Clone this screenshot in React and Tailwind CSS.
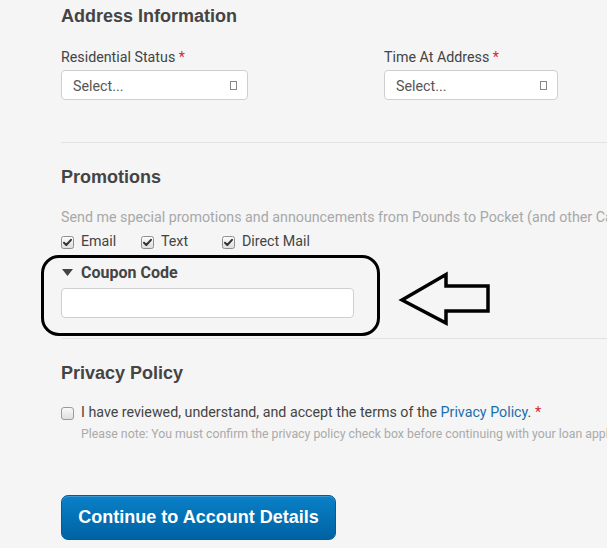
import React from "react";

function Checked() {
  return (
    <svg width="13" height="13" viewBox="0 0 13 13" className="shrink-0">
      <defs>
        <linearGradient id="cg" x1="0" y1="0" x2="0" y2="1">
          <stop offset="0" stopColor="#fdfdfd" />
          <stop offset="1" stopColor="#dcdcdc" />
        </linearGradient>
      </defs>
      <rect x="0.5" y="0.5" width="12" height="12" rx="2" fill="url(#cg)" stroke="#8f8f8f" />
      <path d="M3 6.8 L5.3 9 L10 3.8" fill="none" stroke="#333" strokeWidth="2" strokeLinecap="round" strokeLinejoin="round" />
    </svg>
  );
}

function Unchecked() {
  return (
    <svg width="13" height="13" viewBox="0 0 13 13" className="shrink-0">
      <defs>
        <linearGradient id="ug" x1="0" y1="0" x2="0" y2="1">
          <stop offset="0" stopColor="#fafafa" />
          <stop offset="1" stopColor="#dedede" />
        </linearGradient>
      </defs>
      <rect x="0.5" y="0.5" width="12" height="12" rx="2.5" fill="url(#ug)" stroke="#9a9a9a" />
    </svg>
  );
}

function Select({ width }) {
  return (
    <div
      className={`h-[30px] ${width} bg-white border border-[#cfcfcf] rounded-[4px] flex items-center justify-between pl-[11px] pr-[9px] text-[14.25px] text-[#555]`}
    >
      <span className="mt-[3px]">Select...</span>
      <span className="w-[7px] h-[9px] border border-[#888] mr-[1px]" />
    </div>
  );
}

export default function App() {
  const roboto = { fontFamily: "Roboto, 'Noto Sans', sans-serif" };
  return (
    <div
      className="relative w-[607px] h-[548px] overflow-hidden bg-[#f5f5f5] text-[#444]"
      style={roboto}
    >
      <div className="pl-[61px]">
        <h2 className="pt-[5px] text-[18px] leading-[22px] font-bold text-[#444] font-['Liberation_Sans',Arial,sans-serif]">
          Address Information
        </h2>
        <div className="mt-[20px] flex">
          <div className="w-[323px]">
            <div className="text-[14.25px] leading-[20px]">
              Residential Status <span className="text-[#d9262c]">*</span>
            </div>
            <div className="mt-[3px]">
              <Select width="w-[187px]" />
            </div>
          </div>
          <div>
            <div className="text-[14.25px] leading-[20px]">
              Time At Address <span className="text-[#d9262c]">*</span>
            </div>
            <div className="mt-[3px]">
              <Select width="w-[174px]" />
            </div>
          </div>
        </div>

        <div className="mt-[42px] h-px bg-[#e2e2e2]" />

        <h2 className="mt-[23px] text-[18px] leading-[22px] font-bold text-[#444] font-['Liberation_Sans',Arial,sans-serif]">
          Promotions
        </h2>
        <div className="mt-[19px] text-[14.25px] leading-[20px] text-[#a8a8a8] whitespace-nowrap">
          Send me special promotions and announcements from Pounds to Pocket (and other Cash Store companies)
        </div>
        <div className="mt-[5px] flex items-center h-[20px] text-[14.25px] text-[#444]">
          <Checked />
          <span className="ml-[7px] w-[60px]">Email</span>
          <Checked />
          <span className="ml-[7px] w-[61px]">Text</span>
          <Checked />
          <span className="ml-[7px]">Direct Mail</span>
        </div>

        <div className="mt-[11px] flex items-center h-[20px]">
          <svg width="11" height="8" viewBox="0 0 11 8" className="ml-[1px]">
            <path d="M0 0 H11 L5.5 7 Z" fill="#444" />
          </svg>
          <span className="ml-[8px] text-[16px] font-bold text-[#444]">Coupon Code</span>
        </div>
        <div className="mt-[5px] w-[293px] h-[30px] bg-white border border-[#cfcfcf] rounded-[4px]" />

        <div className="mt-[20px] h-px bg-[#e2e2e2]" />

        <h2 className="mt-[23px] text-[18px] leading-[22px] font-bold text-[#444] font-['Liberation_Sans',Arial,sans-serif]">
          Privacy Policy
        </h2>
        <div className="mt-[19px] flex items-center h-[20px] text-[14.25px] whitespace-nowrap">
          <Unchecked />
          <span className="ml-[7px] text-[#444]">
            I have reviewed, understand, and accept the terms of the{" "}
            <span className="text-[#1b6eae]">Privacy Policy</span>.{" "}
            <span className="text-[#d9262c]">*</span>
          </span>
        </div>
        <div className="ml-[20px] mt-[3px] text-[12.3px] leading-[16px] text-[#aaa] whitespace-nowrap">
          Please note: You must confirm the privacy policy check box before continuing with your loan application.
        </div>

        <button className="mt-[53px] w-[275px] h-[45px] rounded-[7px] border border-[#0a5a8e] bg-gradient-to-b from-[#0b80c8] to-[#0063a3] text-white text-[18px] font-bold font-['Liberation_Sans',Arial,sans-serif] shadow-[inset_0_1px_0_rgba(255,255,255,0.2)]">
          Continue to Account Details
        </button>
      </div>

      <div className="absolute left-[41px] top-[255px] w-[339px] h-[81px] border-[3px] border-black rounded-[18px] pointer-events-none" />
      <svg
        className="absolute left-[395px] top-[268px] pointer-events-none"
        width="100"
        height="62"
        viewBox="0 0 100 62"
      >
        <path
          d="M7 32 L51 6.5 L51 18 L93 18 L93 43 L51 43 L51 55 Z"
          fill="none"
          stroke="#000"
          strokeWidth="3.5"
          strokeLinejoin="miter"
        />
      </svg>
    </div>
  );
}
